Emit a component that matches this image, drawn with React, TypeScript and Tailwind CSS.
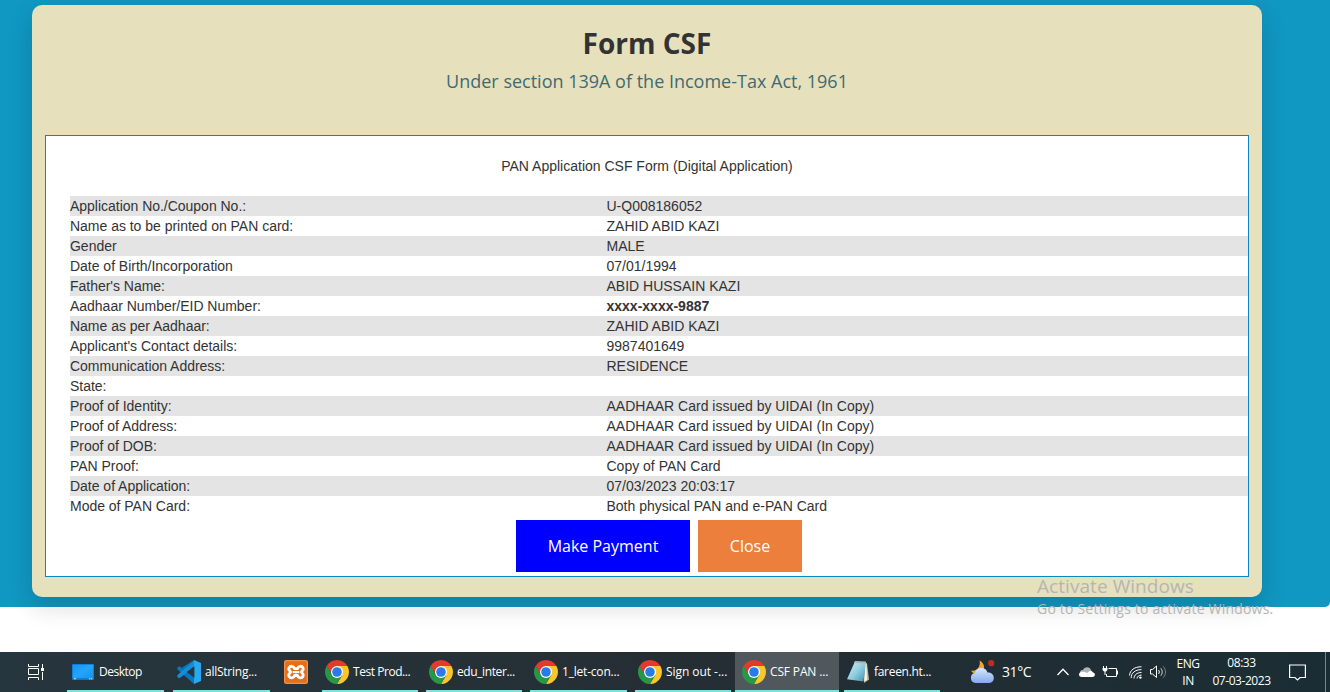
import React from "react";

const rows: { label: string; value: string; bold?: boolean }[] = [
  { label: "Application No./Coupon No.:", value: "U-Q008186052" },
  { label: "Name as to be printed on PAN card:", value: "ZAHID ABID KAZI" },
  { label: "Gender", value: "MALE" },
  { label: "Date of Birth/Incorporation", value: "07/01/1994" },
  { label: "Father's Name:", value: "ABID HUSSAIN KAZI" },
  { label: "Aadhaar Number/EID Number:", value: "xxxx-xxxx-9887", bold: true },
  { label: "Name as per Aadhaar:", value: "ZAHID ABID KAZI" },
  { label: "Applicant's Contact details:", value: "9987401649" },
  { label: "Communication Address:", value: "RESIDENCE" },
  { label: "State:", value: "" },
  { label: "Proof of Identity:", value: "AADHAAR Card issued by UIDAI (In Copy)" },
  { label: "Proof of Address:", value: "AADHAAR Card issued by UIDAI (In Copy)" },
  { label: "Proof of DOB:", value: "AADHAAR Card issued by UIDAI (In Copy)" },
  { label: "PAN Proof:", value: "Copy of PAN Card" },
  { label: "Date of Application:", value: "07/03/2023 20:03:17" },
  { label: "Mode of PAN Card:", value: "Both physical PAN and e-PAN Card" },
];

function TaskViewIcon() {
  return (
    <svg width="18" height="16" viewBox="0 0 18 16" fill="none" stroke="#fff" strokeWidth="1">
      <path d="M1.500 0v2.500h10V0M1.500 16v-2.500h10V16M1.500 4.500h10v6h-10zM15.500 0v4M15.500 8v8" />
      <path d="M14 4h3v3h-3z" fill="#fff" stroke="none" />
    </svg>
  );
}

function DesktopIcon() {
  return (
    <svg width="22" height="16" viewBox="0 0 22 16">
      <defs>
        <linearGradient id="desk" x1="0" y1="0" x2="1" y2="1">
          <stop offset="0" stopColor="#1593f0" />
          <stop offset=".5" stopColor="#25a4fb" />
          <stop offset="1" stopColor="#1692ee" />
        </linearGradient>
      </defs>
      <rect width="22" height="16" rx=".8" fill="#0b76cc" />
      <rect x=".7" y=".7" width="20.6" height="13.6" fill="url(#desk)" />
      <path d="M2 14.800h2M17 14.800h1.300M19 14.800h1.300" stroke="#d5efff" />
    </svg>
  );
}

function CodeIcon() {
  return (
    <svg width="24" height="24" viewBox="0 0 24 24">
      <path d="M17 0 7 9.600 2.600 6.200.3 7.600v1.600L17 24l1-6.400L4.500 7.900z" fill="#0878bc" />
      <path d="M17.200 0 .3 15.200v1.700l2.200 1.300L17.500 6.600z" fill="#168dd8" />
      <path d="M17 0l7 3v18l-7 3z" fill="#29a7f0" />
      <path d="M17.400 6.300v11.400L9.800 12z" fill="#26363e" />
    </svg>
  );
}

function XamppIcon() {
  return (
    <svg width="24" height="24" viewBox="0 0 24 24">
      <rect width="24" height="24" rx="2" fill="#e66d1a" />
      <rect x=".7" y=".7" width="22.600" height="22.600" rx="1.600" fill="none" stroke="#f29a58" />
      <path
        d="M8 6.300C5.200 6 3.600 9.200 6 11.200c.8.600.8 1.200 0 1.800-2.400 2-.8 5.200 2 4.900 1.600-.2 2.200-1.300 2.600-2.400h2.800c.4 1.100 1 2.200 2.600 2.400 2.800.3 4.400-2.900 2-4.900-.8-.6-.8-1.200 0-1.800 2.400-2 .8-5.200-2-4.900-1.600.2-2.200 1.300-2.600 2.400h-2.800C10.200 7.600 9.600 6.500 8 6.300z"
        fill="none"
        stroke="#fff"
        strokeWidth="2.800"
        strokeLinejoin="round"
      />
      <path d="M9.500 12.100h5" stroke="#fff" strokeWidth="2.200" strokeLinecap="round" />
    </svg>
  );
}

function ChromeIcon() {
  return (
    <svg width="24" height="24" viewBox="0 0 24 24">
      <path d="M12 12 1.610 6A12 12 0 0 1 22.390 6z" fill="#e23b2e" />
      <path d="M12 6h10.390A12 12 0 0 1 12 24l5.200-9z" fill="#fcc62b" />
      <path d="M6.800 15 1.610 6A12 12 0 0 0 12 24l5.200-9z" fill="#279847" />
      <path d="M1.610 6 6.200 13.500 12 12V6z" fill="#e23b2e" />
      <path d="M1.610 6 6.800 15l-2.500 2-3.800-8z" fill="#279847" />
      <circle cx="12" cy="12" r="6" fill="#fff" />
      <circle cx="12" cy="12" r="4.800" fill="#2a7bea" />
    </svg>
  );
}

function NotepadIcon() {
  return (
    <svg width="23" height="24" viewBox="0 0 23 24">
      <defs>
        <linearGradient id="note" x1="0" y1="0" x2="1" y2="1">
          <stop offset="0" stopColor="#d8f3f8" />
          <stop offset=".55" stopColor="#8acbdd" />
          <stop offset="1" stopColor="#3d8da6" />
        </linearGradient>
      </defs>
      <path d="M18 2.500l2 1 2 16-5 3.500z" fill="#c9b891" />
      <path d="M18 3l1.400.6L20 20l-2.800 1.600z" fill="#f4f5ef" />
      <path d="M8 1.600l11 .6-2.600 19.400L0 19.200z" fill="url(#note)" />
      <path d="M8 1l11 .6-.3 2L7 3z" fill="#aeb6b5" />
    </svg>
  );
}

function WeatherIcon() {
  return (
    <svg width="25" height="24" viewBox="0 0 25 24">
      <defs>
        <linearGradient id="wx" x1="0" y1="0" x2="0" y2="1">
          <stop offset="0" stopColor="#d7e7ff" />
          <stop offset="1" stopColor="#83a9ed" />
        </linearGradient>
      </defs>
      <path d="M9.500.5C15.500 3 16 12 9 14c-3 .8-7-1-8-3.500C7 12 11 6 9.500.5z" fill="#f6a623" />
      <path d="M5.500 23a5 5 0 0 1-.5-9.900C6 6.500 16 6.500 17.500 12.500c8-.5 8.500 10.500 1 10.500z" fill="url(#wx)" />
      <circle cx="21.200" cy="3.200" r="3.100" fill="#c42b1c" />
    </svg>
  );
}

function OverflowIcon() {
  return (
    <svg width="12" height="8" viewBox="0 0 12 8" fill="none" stroke="#fff" strokeWidth="1.300">
      <path d="M.5 7 6 1.300 11.500 7" />
    </svg>
  );
}

function CloudIcon() {
  return (
    <svg width="16" height="10" viewBox="0 0 16 10">
      <path d="M1 5.500C1 3.500 2.500 2.800 4 3 5.500-.5 11-.8 12.200 3.600L13 7H3z" fill="#aeb3b5" />
      <path d="M3 10C-.5 10-1 6.300 1.500 5.200 4 4.300 6.500 5 8 6.200 10 3.300 13.400 3.300 14 5.600c2.800.4 2.500 4.400-.6 4.400z" fill="#fff" />
    </svg>
  );
}

function BatteryIcon() {
  return (
    <svg width="17" height="12" viewBox="0 0 17 12" fill="none" stroke="#fff">
      <path d="M6.500 2.500h8v8H4.500V8M15.500 4.500v4M1.500 0v2M4.500 0v2M3 5v4" />
      <path d="M.5 2h5v2L4 5.500H2L.5 4z" fill="#fff" stroke="none" />
    </svg>
  );
}

function WifiIcon() {
  return (
    <svg width="13" height="13" viewBox="0 0 13 13" fill="none" stroke="#fff" strokeWidth="1">
      <path d="M.5 9.500C.9 4.300 5.500.6 12.500.8M2.200 12C2 7.300 6 3.500 12.500 3.700M5 12.500c0-3.500 3-6 7.500-6M8 12.500c.2-2 2-3.400 4.500-3.400" />
      <circle cx="11.400" cy="11.600" r="1.200" fill="#fff" stroke="none" />
    </svg>
  );
}

function SpeakerIcon() {
  return (
    <svg width="17" height="14" viewBox="0 0 17 14" fill="none" stroke="#fff" strokeWidth="1">
      <path d="M.5 4.500h2L6.500 1v11.500L2.500 9h-2z" />
      <path d="M8.500 5c1 1 1 3 0 4" />
      <path d="M10.700 3.200c2 2.100 2 5.500 0 7.600" opacity=".75" />
      <path d="M13 1.300c3.300 3 3.300 8.400 0 11.400" opacity=".4" />
    </svg>
  );
}

function NotificationIcon() {
  return (
    <svg width="17" height="17" viewBox="0 0 17 17" fill="none" stroke="#fff" strokeWidth="1.200">
      <path d="M.6 1h15.800v12.500h-5.300L8.500 16l-2.600-2.500H.6z" />
    </svg>
  );
}

function Task({
  icon,
  label,
  className,
  labelClass = "",
}: {
  icon: React.ReactNode;
  label: string;
  className: string;
  labelClass?: string;
}) {
  return (
    <div className={`flex h-10 shrink-0 items-center gap-1 border-b-2 border-[#7fe0e0] pt-px ${className}`}>
      {icon}
      <span className={`whitespace-nowrap pt-px text-xs leading-4 ${labelClass}`}>{label}</span>
    </div>
  );
}

function Taskbar() {
  return (
    <footer className="flex h-10 w-full items-center overflow-hidden bg-linear-to-r from-[#26363e] via-[#252e34] to-[#1b2d34] font-['Open_Sans',sans-serif] text-white">
      <div className="ml-[27px] w-[40px] shrink-0">
        <TaskViewIcon />
      </div>
      <Task icon={<DesktopIcon />} label="Desktop" className="w-[97px] gap-[5px] pl-[5px]" labelClass="tracking-[-0.5px]" />
      <Task icon={<CodeIcon />} label="allString..." className="ml-[9px] w-[97px] pl-1" labelClass="tracking-[-0.25px]" />
      <div className="ml-[14px] w-[38px] shrink-0">
        <XamppIcon />
      </div>
      <Task icon={<ChromeIcon />} label="Test Prod..." className="w-[96px] pl-[3px]" labelClass="tracking-[-0.45px]" />
      <Task icon={<ChromeIcon />} label="edu_inter..." className="ml-2 w-[96px] pl-[3px]" labelClass="tracking-[-0.4px]" />
      <Task icon={<ChromeIcon />} label="1_let-con..." className="ml-2 w-[97px] pl-1" labelClass="tracking-[-0.2px]" />
      <Task icon={<ChromeIcon />} label="Sign out -..." className="ml-2 w-[96px] pl-[3px]" labelClass="tracking-[-0.05px]" />
      <Task icon={<ChromeIcon />} label="CSF PAN ..." className="ml-1 w-[104px] bg-[#50585d] pl-[7px]" labelClass="tracking-[-0.15px]" />
      <Task icon={<NotepadIcon />} label="fareen.ht..." className="ml-[5px] w-[96px] pl-[3px]" labelClass="tracking-[-0.3px]" />
      <div className="ml-[30px] flex w-[87px] shrink-0 items-center gap-[7px]">
        <WeatherIcon />
        <span className="text-sm leading-4 tracking-[-0.4px]">31°C</span>
      </div>
      <div className="flex w-[119px] shrink-0 items-center">
        <OverflowIcon />
        <span className="ml-[10px]"><CloudIcon /></span>
        <span className="ml-[7px]"><BatteryIcon /></span>
        <span className="ml-[10px]"><WifiIcon /></span>
        <span className="ml-[8px]"><SpeakerIcon /></span>
      </div>
      <div className="flex w-6 shrink-0 flex-col items-center text-xs leading-[17px] tracking-[-0.5px]">
        <span>ENG</span>
        <span>IN</span>
      </div>
      <div className="ml-2 flex w-[67px] shrink-0 flex-col items-center whitespace-nowrap text-xs leading-[18px] tracking-[-0.45px]">
        <span>08:33</span>
        <span>07-03-2023</span>
      </div>
      <div className="ml-[14px] w-9 shrink-0">
        <NotificationIcon />
      </div>
      <div className="h-10 w-px shrink-0 bg-[#77848a]" />
    </footer>
  );
}

export default function App() {
  return (
    <div className="relative flex h-[692px] w-[1330px] flex-col overflow-hidden bg-white">
      <main className="h-[607px] shrink-0 rounded-br-[5px] bg-[#1097c2] pt-[5px] pr-[68px] pl-8">
        <section className="h-[592px] rounded-[10px] bg-[#e6e1bc] px-[13px] shadow-[0_10px_25px_rgba(0,0,0,0.15)]">
          <header className="flex h-[130px] flex-col items-center pt-[19px] font-['Open_Sans',sans-serif]">
            <h1 className="text-[28px] leading-[38px] font-bold text-[#333]">Form CSF</h1>
            <p className="mt-[5px] text-lg leading-7 font-normal text-[#3f6a74]">
              Under section 139A of the Income-Tax Act, 1961
            </p>
          </header>
          <div className="h-[442px] border border-[#0a86c0] bg-white font-['Liberation_Sans',Arial,sans-serif] text-sm leading-5 text-[#333]">
            <p className="h-[60px] pt-5 text-center">PAN Application CSF Form (Digital Application)</p>
            <dl className="ml-6">
              {rows.map((row) => (
                <div key={row.label} className="flex h-5 odd:bg-[#e4e4e4]">
                  <dt className="w-[536.5px] shrink-0 tracking-[-0.02px]">{row.label}</dt>
                  <dd className={row.bold ? "font-bold" : ""}>{row.value}</dd>
                </div>
              ))}
            </dl>
            <div className="mt-1 ml-[470px] flex gap-2 font-['Open_Sans',sans-serif] text-base text-white">
              <button className="h-[52px] w-[174px] bg-[#0000ff]">Make Payment</button>
              <button className="h-[52px] w-[104px] bg-[#eb7f3b]">Close</button>
            </div>
          </div>
        </section>
      </main>
      <div className="h-[45px] shrink-0" />
      <Taskbar />
      <aside className="absolute top-[574px] left-[1037px] whitespace-nowrap font-['Open_Sans',sans-serif] text-[#b5b5b1]">
        <p className="text-[19px] leading-6 tracking-[0.06px]">Activate Windows</p>
        <p className="text-sm leading-[21px] tracking-[0.2px]">Go to Settings to activate Windows.</p>
      </aside>
    </div>
  );
}
